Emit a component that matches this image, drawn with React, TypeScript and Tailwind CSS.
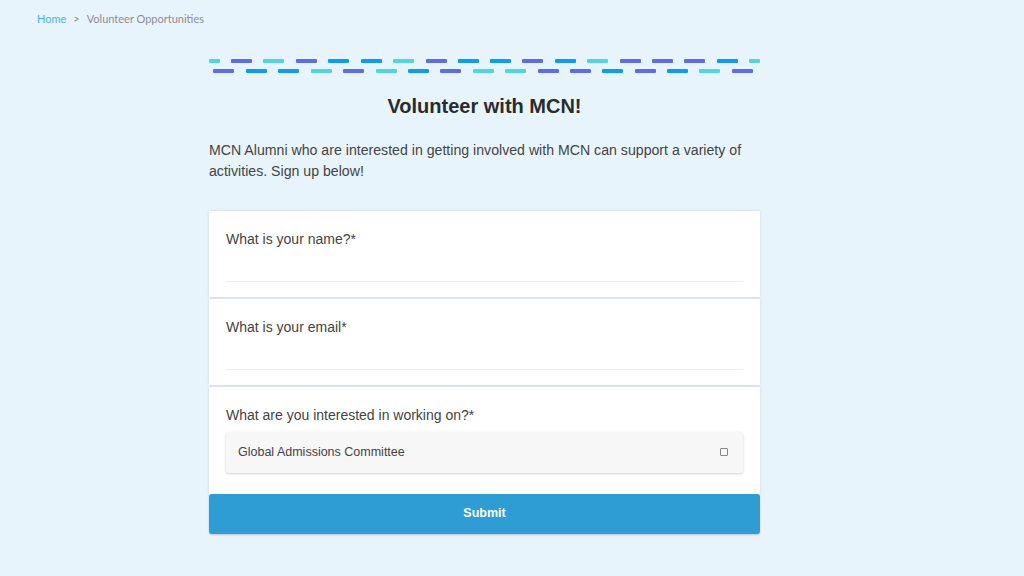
import React from 'react'

const C = '#4dd6e6'
const I = '#5b6bf4'
const B = '#0a9bff'

// dash rows: [x, color]
const row1: [number, string][] = [
  [22, I], [54, C], [87, I], [119, B], [152, B], [184, C], [217, I], [249, B],
  [281, B], [313, I], [346, B], [378, C], [411, I], [443, I], [475, I], [508, B],
]
const row2: [number, string][] = [
  [4, I], [37, B], [69, B], [102, C], [134, I], [167, C], [199, B], [231, I],
  [264, C], [296, C], [329, I], [361, I], [393, B], [426, I], [458, B], [490, C], [523, I],
]

const DashBars = () => (
  <svg width="551" height="17" viewBox="0 0 551 17" className="block">
    <rect x="0" y="1" width="11" height="4" rx="1" fill={C} />
    {row1.map(([x, c], i) => (
      <rect key={i} x={x} y="1" width="21" height="4" rx="1" fill={c} />
    ))}
    <rect x="540" y="1" width="11" height="4" rx="1" fill={C} />
    {row2.map(([x, c], i) => (
      <rect key={i} x={x} y="11" width="21" height="4" rx="1" fill={c} />
    ))}
  </svg>
)

const TextQuestion = ({ label }: { label: string }) => (
  <div className="bg-white shadow-[0_0_3px_rgba(0,0,0,0.12)] px-[17px] pt-[19px] pb-[15px]">
    <label className="block text-[14px] text-[#444] leading-[18px]">{label}</label>
    <input className="block w-full mt-[14px] h-[20px] border-b border-[#ececec] outline-none bg-transparent" />
  </div>
)

export default function App() {
  return (
    <div className="min-h-[576px] bg-[#e8f4fb] font-['Liberation_Sans',Arial,sans-serif]">
      <nav className="flex items-center gap-[7px] px-[37px] pt-[11px] text-[11px] font-['Lato',sans-serif] text-[#8a8f93]">
        <a className="text-[#3eb1ec]">Home</a>
        <span>&gt;</span>
        <span>Volunteer Opportunities</span>
      </nav>

      <main className="w-[551px] ml-[209px] mt-[30px]">
        <DashBars />
        <h1 className="text-center text-[20px] font-bold text-[#2b2b2b] mt-[19px] leading-[24px]">
          Volunteer with MCN!
        </h1>
        <p className="mt-[22px] text-[14.15px] leading-[21px] text-[#444]">
          MCN Alumni who are interested in getting involved with MCN can support a variety of activities. Sign up below!
        </p>

        <form className="mt-[29px] flex flex-col gap-[2px]">
          <TextQuestion label="What is your name?*" />
          <TextQuestion label="What is your email*" />
          <div className="bg-white shadow-[0_0_3px_rgba(0,0,0,0.12)] px-[17px] pt-[19px] pb-[21px]">
            <label className="block text-[14px] text-[#444] leading-[18px]">What are you interested in working on?*</label>
            <div className="mt-[8px] h-[41px] rounded-[3px] bg-[#f7f7f7] shadow-[0_1px_3px_rgba(0,0,0,0.18)] flex items-center justify-between pl-[12px] pr-[15px]">
              <span className="text-[12.5px] text-[#444]">Global Admissions Committee</span>
              <span className="w-[8px] h-[8px] border border-[#888] rounded-[1px]" />
            </div>
          </div>
          <button
            type="button"
            className="-mt-[2px] h-[40px] rounded-[3px] bg-[#2e9dd3] text-white text-[12.5px] font-bold shadow-[0_1px_2px_rgba(0,0,0,0.2)]"
          >
            Submit
          </button>
        </form>
      </main>
    </div>
  )
}
